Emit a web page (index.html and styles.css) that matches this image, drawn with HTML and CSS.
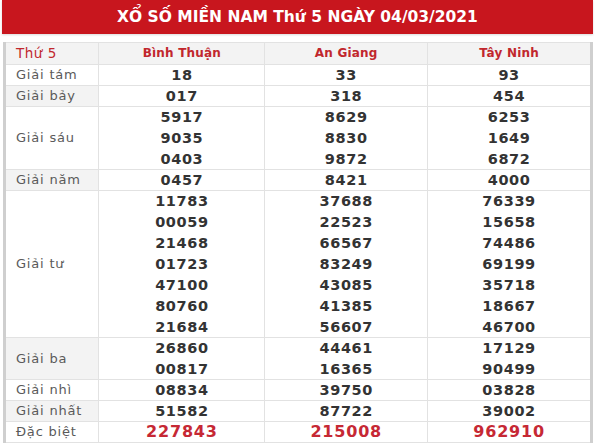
FILE: index.html
```html
<!DOCTYPE html>
<html lang="vi">
<head>
<meta charset="utf-8">
<title>XSMN</title>
<link rel="stylesheet" href="styles.css">
</head>
<body>
<div class="page">
  <h1 class="title">XỔ SỐ MIỀN NAM Thứ 5 NGÀY 04/03/2021</h1>
  <table class="kq">
    <colgroup>
      <col class="c0"><col class="c1"><col class="c2"><col class="c3">
    </colgroup>
    <thead>
      <tr>
        <th class="lbl day">Thứ 5</th>
        <th class="prov">Bình Thuận</th>
        <th class="prov">An Giang</th>
        <th class="prov">Tây Ninh</th>
      </tr>
    </thead>
    <tbody>
      <tr>
        <td class="lbl">Giải tám</td>
        <td class="n">18</td><td class="n">33</td><td class="n">93</td>
      </tr>
      <tr class="alt">
        <td class="lbl">Giải bảy</td>
        <td class="n">017</td><td class="n">318</td><td class="n">454</td>
      </tr>
      <tr>
        <td class="lbl">Giải sáu</td>
        <td class="n multi"><div>5917</div><div>9035</div><div>0403</div></td>
        <td class="n multi"><div>8629</div><div>8830</div><div>9872</div></td>
        <td class="n multi"><div>6253</div><div>1649</div><div>6872</div></td>
      </tr>
      <tr class="alt">
        <td class="lbl">Giải năm</td>
        <td class="n">0457</td><td class="n">8421</td><td class="n">4000</td>
      </tr>
      <tr>
        <td class="lbl">Giải tư</td>
        <td class="n multi"><div>11783</div><div>00059</div><div>21468</div><div>01723</div><div>47100</div><div>80760</div><div>21684</div></td>
        <td class="n multi"><div>37688</div><div>22523</div><div>66567</div><div>83249</div><div>43085</div><div>41385</div><div>56607</div></td>
        <td class="n multi"><div>76339</div><div>15658</div><div>74486</div><div>69199</div><div>35718</div><div>18667</div><div>46700</div></td>
      </tr>
      <tr class="alt">
        <td class="lbl">Giải ba</td>
        <td class="n multi"><div>26860</div><div>00817</div></td>
        <td class="n multi"><div>44461</div><div>16365</div></td>
        <td class="n multi"><div>17129</div><div>90499</div></td>
      </tr>
      <tr>
        <td class="lbl">Giải nhì</td>
        <td class="n">08834</td><td class="n">39750</td><td class="n">03828</td>
      </tr>
      <tr class="alt">
        <td class="lbl">Giải nhất</td>
        <td class="n">51582</td><td class="n">87722</td><td class="n">39002</td>
      </tr>
      <tr>
        <td class="lbl">Đặc biệt</td>
        <td class="n db">227843</td><td class="n db">215008</td><td class="n db">962910</td>
      </tr>
    </tbody>
  </table>
</div>
</body>
</html>
```

FILE: styles.css
```css
html, body {
  margin: 0;
  padding: 0;
  background: #ffffff;
}

body {
  font-family: "DejaVu Sans", "Liberation Sans", sans-serif;
  color: #333;
}

.page {
  width: 600px;
  display: flex;
  flex-direction: column;
  align-items: flex-start;
}

.title {
  margin: 0 0 8px 2px;
  width: 591px;
  height: 34px;
  background: #c8161e;
  color: #ffffff;
  font-size: 15.5px;
  font-weight: bold;
  line-height: 34px;
  text-align: center;
  box-shadow: 0 1px 2px rgba(0, 0, 0, 0.15);
}

.kq {
  margin-left: 3px;
  width: 590px;
  border-collapse: collapse;
  table-layout: fixed;
  border-left: 3px solid #cfcfcf;
  border-right: 3px solid #cfcfcf;
}

.c0 { width: 94px; }
.c1 { width: 165px; }
.c2 { width: 162px; }
.c3 { width: 163px; }

.kq th,
.kq td {
  border: 1px solid #e2e2e2;
  padding: 0;
}

.kq thead th {
  background: #f3f3f3;
  height: 21px;
  line-height: 21px;
}

.prov {
  color: #c1272d;
  font-size: 12px;
  font-weight: bold;
  letter-spacing: 0.2px;
  text-align: center;
}

.lbl {
  text-align: left;
  padding-left: 10px !important;
  font-size: 13px;
  letter-spacing: 0.8px;
  color: #5a5a5a;
  font-weight: normal;
  line-height: 20px;
}

.day {
  color: #c1272d;
  font-size: 13.5px;
  letter-spacing: 0.5px;
}

.alt .lbl {
  background: #f3f3f3;
}

.n {
  text-align: center;
  font-size: 14.5px;
  font-weight: bold;
  letter-spacing: 0.6px;
  color: #333;
  line-height: 20px;
}

.multi div {
  line-height: 21px;
}

.multi div:last-child {
  line-height: 20px;
}

.db {
  color: #c62834;
  font-size: 16px;
  letter-spacing: 0.8px;
}
```
